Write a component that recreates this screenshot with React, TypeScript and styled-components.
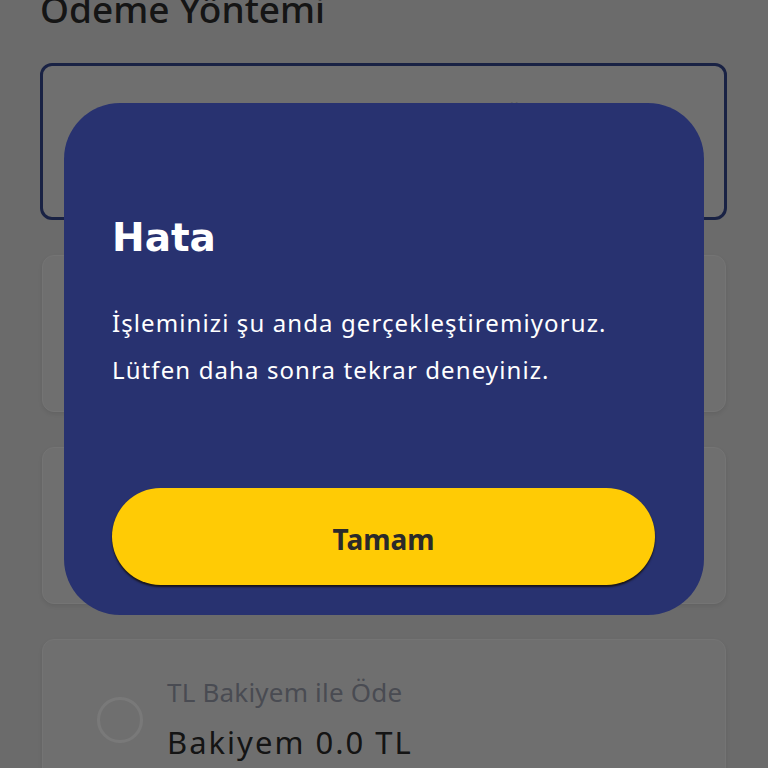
import React from "react";
import styled, { createGlobalStyle } from "styled-components";

const Global = createGlobalStyle`
  html, body {
    margin: 0;
    padding: 0;
    width: 768px;
    height: 768px;
    overflow: hidden;
    background: #dfdfdf;
    font-family: "Noto Sans", "Open Sans", sans-serif;
  }
  * { box-sizing: border-box; }
`;

const Page = styled.div`
  display: flex;
  flex-direction: column;
  padding: 0 41px 0 40px;
  margin-top: -13px;
`;

const Heading = styled.h1`
  margin: 0 0 32px;
  font-size: 37px;
  font-weight: 500;
  color: #2c2c2c;
  line-height: 44px;
`;

const CardList = styled.div`
  display: flex;
  flex-direction: column;
  gap: 35px;
`;

const Card = styled.div<{ $selected?: boolean }>`
  height: 157px;
  border-radius: 12px;
  background: #e9e9e9;
  border: ${(p) => (p.$selected ? "3px solid #35478f" : "1px solid #f2f2f2")};
  box-shadow: ${(p) => (p.$selected ? "none" : "0 2px 4px rgba(0,0,0,0.08)")};
  margin: ${(p) => (p.$selected ? "0" : "0 1px 0 2px")};
  display: flex;
  align-items: center;
  gap: 24px;
  padding: ${(p) => (p.$selected ? "0 0 0 52px" : "0 0 0 54px")};
`;

const Radio = styled.div`
  width: 46px;
  height: 46px;
  border-radius: 50%;
  border: 3px solid #fdfdfd;
  flex: none;
  margin-top: 4px;
`;

const CardText = styled.div`
  display: flex;
  flex-direction: column;
  gap: 15px;
  margin-top: 1px;
`;

const Label = styled.div`
  font-size: 26px;
  color: #9a9eac;
  line-height: 32px;
  letter-spacing: 0.2px;
`;

const Value = styled.div`
  font-size: 31px;
  color: #2b2b2b;
  line-height: 38px;
  letter-spacing: 2px;
`;

const Overlay = styled.div`
  position: fixed;
  inset: 0;
  background: rgba(0, 0, 0, 0.52);
  display: flex;
  justify-content: center;
  align-items: flex-start;
  padding-top: 103px;
`;

const Dialog = styled.div`
  width: 640px;
  height: 512px;
  background: #283270;
  border-radius: 56px;
  padding: 113px 49px 0 48px;
  display: flex;
  flex-direction: column;
`;

const Title = styled.h2`
  margin: 0;
  font-family: "DejaVu Sans", "Noto Sans", sans-serif;
  font-size: 39px;
  font-weight: 700;
  color: #ffffff;
  line-height: 44px;
`;

const Message = styled.p`
  margin: 39px 0 0;
  font-size: 24px;
  line-height: 47px;
  letter-spacing: 1.1px;
  color: #ffffff;
`;

const OkButton = styled.button`
  margin-top: auto;
  margin-bottom: 30px;
  height: 97px;
  width: 100%;
  border: none;
  border-radius: 49px;
  background: #ffcb05;
  box-shadow: 0 2px 2px rgba(20, 14, 10, 0.85);
  font-family: inherit;
  font-size: 28px;
  font-weight: 700;
  color: #2a2a2a;
  padding: 4px 0 0;
  cursor: pointer;
`;

type Method = { id: string; label?: string; value?: string; selected?: boolean };

const methods: Method[] = [
  { id: "saved", label: "Kredi Kartı / Banka Kartı ile Öde", value: "Kartlarım", selected: true },
  { id: "card" },
  { id: "mobile" },
  { id: "balance", label: "TL Bakiyem ile Öde", value: "Bakiyem 0.0 TL" },
];

export default function App() {
  return (
    <>
      <Global />
      <Page>
        <Heading>Ödeme Yöntemi</Heading>
        <CardList>
          {methods.map((m) => (
            <Card key={m.id} $selected={m.selected}>
              <Radio />
              {m.label && (
                <CardText>
                  <Label>{m.label}</Label>
                  <Value>{m.value}</Value>
                </CardText>
              )}
            </Card>
          ))}
        </CardList>
      </Page>
      <Overlay>
        <Dialog role="alertdialog">
          <Title>Hata</Title>
          <Message>
            İşleminizi şu anda gerçekleştiremiyoruz.
            <br />
            Lütfen daha sonra tekrar deneyiniz.
          </Message>
          <OkButton>Tamam</OkButton>
        </Dialog>
      </Overlay>
    </>
  );
}
